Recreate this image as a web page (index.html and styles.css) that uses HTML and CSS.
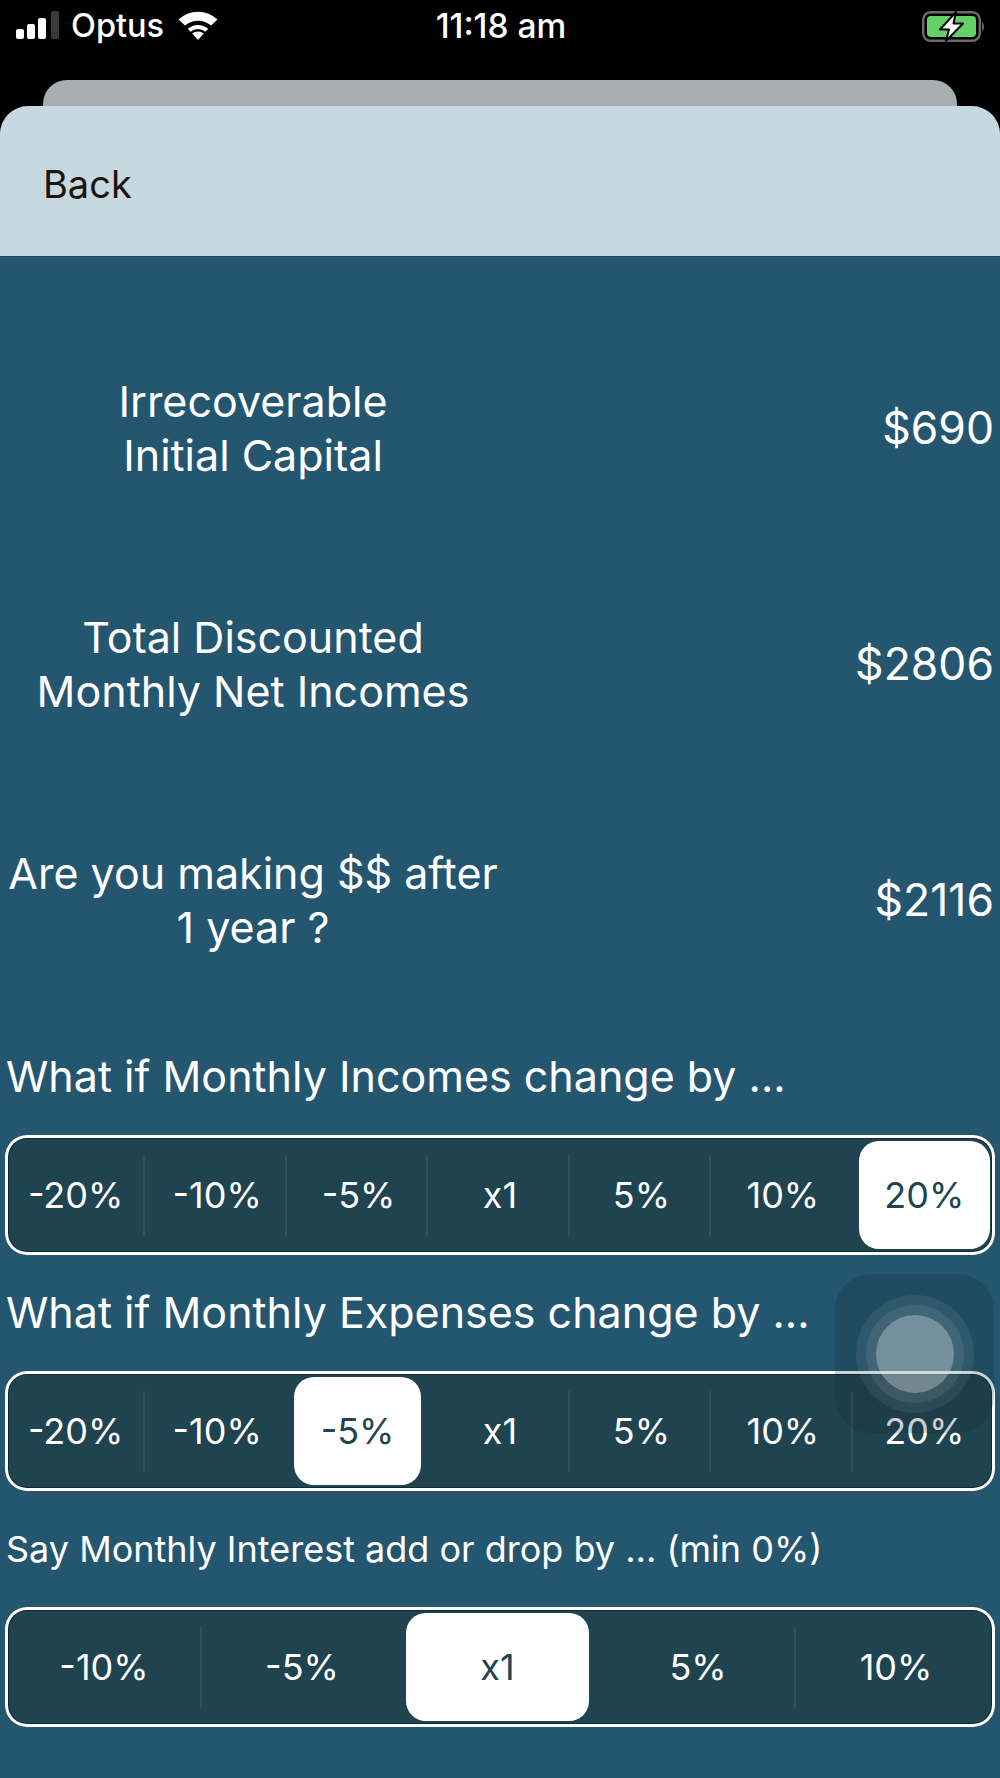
FILE: index.html
```html
<!DOCTYPE html>
<html lang="en">
<head>
<meta charset="utf-8">
<title>What if</title>
<link rel="stylesheet" href="styles.css">
</head>
<body>
<div class="screen">
  <header class="status">
    <div class="status-left">
      <svg class="signal" width="46" height="30" viewBox="0 0 46 30">
        <rect x="0" y="18" width="8" height="10" rx="2" fill="#fff"/>
        <rect x="11" y="13" width="8" height="15" rx="2" fill="#fff"/>
        <rect x="22" y="7" width="8" height="21" rx="2" fill="#fff"/>
        <rect x="35" y="0" width="8" height="28" rx="2" fill="#3a3a3c"/>
      </svg>
      <span class="carrier">Optus</span>
      <svg class="wifi" width="40" height="30" viewBox="0 0 40 30">
        <path d="M20 29 L14.2 22.6 A9 9 0 0 1 25.8 22.6 Z" fill="#fff"/>
        <path d="M9.8 17.8 A15.5 15.5 0 0 1 30.2 17.8 L27.4 20.8 A11.5 11.5 0 0 0 12.6 20.8 Z" fill="#fff"/>
        <path d="M0.5 9.6 A28 28 0 0 1 39.5 9.6 L33 15.6 A20 20 0 0 0 7 15.6 Z" fill="#fff" transform="translate(0 -1)"/>
      </svg>
    </div>
    <div class="clock">11:18 am</div>
    <div class="status-right">
      <svg class="battery" width="64" height="32" viewBox="0 0 64 32">
        <rect x="1.2" y="1.2" width="56.6" height="28.6" rx="7.5" fill="none" stroke="#6b6b6b" stroke-width="2.4"/>
        <rect x="5" y="5" width="49" height="21" rx="4" fill="#63d168"/>
        <path d="M60 11 C62.5 12 62.5 19 60 20 Z" fill="#6b6b6b"/>
        <path d="M34 1 L18 18.5 H27 L24 30 L41 12.5 H31.5 Z" fill="#fff" stroke="#000" stroke-width="2" stroke-linejoin="round"/>
      </svg>
    </div>
  </header>

  <div class="sheet-behind"></div>

  <nav class="topbar"><span class="back">Back</span></nav>

  <main class="content">
    <section class="stat">
      <div class="stat-label">Irrecoverable<br>Initial Capital</div>
      <div class="stat-value">$690</div>
    </section>
    <section class="stat">
      <div class="stat-label">Total Discounted<br>Monthly Net Incomes</div>
      <div class="stat-value">$2806</div>
    </section>
    <section class="stat">
      <div class="stat-label">Are you making $$ after<br>1 year ?</div>
      <div class="stat-value">$2116</div>
    </section>

    <h2 class="field-label">What if Monthly Incomes change by ...</h2>
    <div class="segments seven">
      <div class="seg">-20%</div><div class="seg">-10%</div><div class="seg">-5%</div><div class="seg">x1</div><div class="seg">5%</div><div class="seg before-on">10%</div><div class="seg on last">20%</div>
    </div>

    <h2 class="field-label">What if Monthly Expenses change by ...</h2>
    <div class="segments seven">
      <div class="seg">-20%</div><div class="seg before-on">-10%</div><div class="seg on">-5%</div><div class="seg">x1</div><div class="seg">5%</div><div class="seg">10%</div><div class="seg last">20%</div>
    </div>

    <h2 class="field-label small">Say Monthly Interest add or drop by ... (min 0%)</h2>
    <div class="segments five">
      <div class="seg">-10%</div><div class="seg before-on">-5%</div><div class="seg on">x1</div><div class="seg">5%</div><div class="seg last">10%</div>
    </div>
  </main>

  <div class="assistive">
    <div class="ring-a"><div class="ring-b"><div class="ring-c"></div></div></div>
  </div>
</div>
</body>
</html>
```

FILE: styles.css
```css
* { box-sizing: border-box; }
html, body { margin: 0; padding: 0; background: #000; }
body { font-family: "Inter", "Liberation Sans", sans-serif; }

.screen {
  position: relative;
  width: 1000px;
  height: 1778px;
  overflow: hidden;
  background: #000;
  display: flex;
  flex-direction: column;
}

.status {
  height: 80px;
  flex: none;
  display: grid;
  grid-template-columns: 1fr auto 1fr;
  align-items: start;
  color: #fff;
  padding: 11px 14px 0 16px;
}
.status-left { display: flex; align-items: center; }
.signal { flex: none; }
.carrier { font-size: 32.5px; line-height: 30px; font-weight: 500; margin-left: 9px; }
.wifi { flex: none; margin-left: 14px; }
.clock { font-size: 33.5px; line-height: 30px; font-weight: 500; }
.status-right { display: flex; justify-content: flex-end; }

.sheet-behind {
  flex: none;
  height: 26px;
  margin: 0 43px;
  background: #a6aeb0;
  border-radius: 24px 24px 0 0;
}

.topbar {
  flex: none;
  height: 151px;
  background: #c6d9e0;
  border-radius: 28px 28px 0 0;
  padding: 0 43px;
  display: flex;
  align-items: center;
  border-bottom: 1px solid #18455a;
}
.back { font-size: 38px; color: #1d1512; padding-top: 5px; }

.content {
  flex: 1;
  background: #24566f;
  color: #fff;
  padding-top: 54px;
}

.stat {
  height: 236px;
  display: flex;
  align-items: center;
  justify-content: space-between;
  padding: 0 6px 3px 0;
}
.stat-label {
  width: 506px;
  text-align: center;
  font-size: 43px;
  line-height: 54px;
}
.stat-value { font-size: 44.5px; line-height: 54px; }

.field-label {
  margin: 0;
  height: 116px;
  padding: 0 0 3px 6px;
  display: flex;
  align-items: center;
  font-size: 43px;
  font-weight: 400;
}
.field-label.small { font-size: 36px; padding: 0 0 0 6px; }

.segments {
  display: grid;
  height: 120px;
  margin: 0 5px;
  border-radius: 22px;
  background: #204350;
  box-shadow: inset 0 0 0 3px #fff, inset 0 0 0 4px #0e2a38;
}
.seven { grid-template-columns: repeat(7, 1fr); }
.five { grid-template-columns: repeat(5, 1fr); }

.seg {
  position: relative;
  display: flex;
  align-items: center;
  justify-content: center;
  font-size: 36px;
  color: #fff;
}
.seg::after {
  content: "";
  position: absolute;
  right: 1px;
  top: 20px;
  bottom: 19px;
  width: 2px;
  background: #2f5160;
}
.seg.last::after, .seg.on::after, .seg.before-on::after { display: none; }

.seg.on {
  margin: 6px 8px 6px 6px;
  background: #fff;
  color: #204350;
  border-radius: 20px;
}
.five .seg.on { margin: 6px 10px 6px 5px; }
.seg.on.last { margin: 6px 5px; }

.assistive {
  position: absolute;
  left: 835px;
  top: 1274px;
  width: 159px;
  height: 159px;
  border-radius: 36px;
  background: rgba(18, 40, 50, 0.22);
  display: flex;
  align-items: center;
  justify-content: center;
}
.ring-a, .ring-b, .ring-c {
  border-radius: 50%;
  display: flex;
  align-items: center;
  justify-content: center;
}
.ring-a { width: 118px; height: 118px; background: rgba(255, 255, 255, 0.07); }
.ring-b { width: 98px; height: 98px; background: rgba(255, 255, 255, 0.08); }
.ring-c { width: 78px; height: 78px; background: rgba(225, 235, 235, 0.33); }
```
